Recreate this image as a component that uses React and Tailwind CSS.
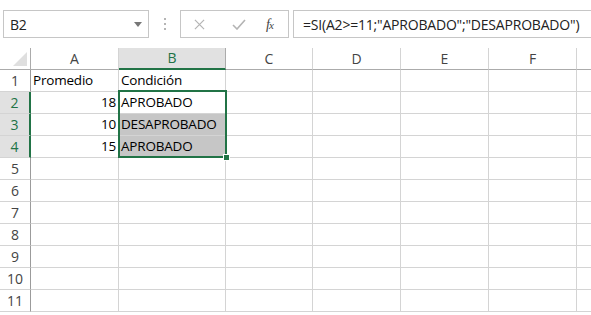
import React from 'react';

const cols = [
  { key: 'A', w: 'w-[88px]' },
  { key: 'B', w: 'w-[107px]' },
  { key: 'C', w: 'w-[87px]' },
  { key: 'D', w: 'w-[88px]' },
  { key: 'E', w: 'w-[88px]' },
  { key: 'F', w: 'w-[88px]' },
];

const data = {
  1: { A: 'Promedio', B: 'Condición' },
  2: { A: '18', B: 'APROBADO' },
  3: { A: '10', B: 'DESAPROBADO' },
  4: { A: '15', B: 'APROBADO' },
};

function Cell({ col, row }) {
  const v = data[row]?.[col.key] ?? '';
  const num = col.key === 'A' && row > 1;
  const gray = col.key === 'B' && (row === 3 || row === 4);
  return (
    <div
      className={`${col.w} h-[22px] shrink-0 border-r border-b border-[#d4d4d4] px-[2px] leading-[21px] text-[13.5px] tracking-[-0.2px] text-black overflow-visible whitespace-nowrap ${
        num ? 'text-right' : ''
      } ${gray ? 'bg-[#c6c6c6]' : 'bg-white'}`}
    >
      {v}
    </div>
  );
}

export default function App() {
  const rows = [1, 2, 3, 4, 5, 6, 7, 8, 9, 10, 11];
  return (
    <div className="w-[591px] h-[315px] bg-white overflow-hidden relative font-['Open_Sans',sans-serif]">
      {/* formula bar */}
      <div className="flex items-start pt-[10px] pl-[3px] h-[48px]">
        <div className="w-[146px] h-[28px] shrink-0 border border-[#c6c6c6] flex items-center justify-between pl-[6px] pr-[6px]">
          <span className="text-[14px] tracking-[-0.2px] text-[#222]">B2</span>
          <svg width="8" height="5" viewBox="0 0 8 5"><path d="M0 0h8L4 5z" fill="#777" /></svg>
        </div>
        <div className="w-[31px] h-[28px] shrink-0 flex flex-col items-center justify-center gap-[3px]">
          <span className="w-[2px] h-[2px] bg-[#b5b5b5]" />
          <span className="w-[2px] h-[2px] bg-[#b5b5b5]" />
          <span className="w-[2px] h-[2px] bg-[#b5b5b5]" />
        </div>
        <div className="w-[109px] h-[28px] shrink-0 border border-[#c6c6c6] flex items-center">
          <svg className="ml-[13px]" width="11" height="11" viewBox="0 0 12 12">
            <path d="M1 1L11 11M11 1L1 11" stroke="#b4b4b4" strokeWidth="1.3" />
          </svg>
          <svg className="ml-[27px]" width="14" height="11" viewBox="0 0 14 11">
            <path d="M1 6L5 10L13 1" stroke="#b4b4b4" strokeWidth="1.6" fill="none" />
          </svg>
          <span className="ml-[20px] text-[14px] italic text-[#444] font-['Liberation_Serif',serif] tracking-[-1px]">
            f<span className="text-[11px]">x</span>
          </span>
        </div>
        <div className="ml-[4px] flex-1 min-w-0 h-[28px] border border-r-0 border-[#c6c6c6] flex items-center pl-[9px] text-[14px] tracking-[-0.2px] text-[#222] whitespace-nowrap overflow-hidden">
          =SI(A2&gt;=11;"APROBADO";"DESAPROBADO")
        </div>
      </div>

      {/* grid */}
      <div className="flex flex-col">
        <div className="flex h-[22px]">
          <div className="w-[31px] h-[22px] shrink-0 border-r border-b border-[#ababab] relative">
            <svg className="absolute right-[3px] bottom-[3px]" width="14" height="14" viewBox="0 0 14 14">
              <path d="M14 0V14H0z" fill="#dfdfdf" />
            </svg>
          </div>
          {cols.map((c) =>
            c.key === 'B' ? (
              <div
                key={c.key}
                className={`${c.w} h-[22px] shrink-0 bg-[#e1e1e1] border-r border-[#ababab] border-b-2 border-b-[#217346] text-center text-[14px] leading-[20px] text-[#217346]`}
              >
                {c.key}
              </div>
            ) : (
              <div
                key={c.key}
                className={`${c.w} h-[22px] shrink-0 border-r border-[#d4d4d4] border-b border-b-[#ababab] text-center text-[14px] leading-[21px] text-[#444]`}
              >
                {c.key}
              </div>
            )
          )}
          <div className="flex-1 border-b border-[#ababab]" />
        </div>
        {rows.map((r) => {
          const sel = r >= 2 && r <= 4;
          return (
            <div key={r} className="flex h-[22px]">
              <div
                className={`w-[31px] h-[22px] shrink-0 border-b border-[#d4d4d4] text-center text-[14px] leading-[21px] ${
                  sel
                    ? 'bg-[#e1e1e1] text-[#217346] border-r-2 border-r-[#217346]'
                    : 'text-[#444] border-r border-r-[#9b9b9b]'
                }`}
              >
                {r}
              </div>
              {cols.map((c) => (
                <Cell key={c.key} col={c} row={r} />
              ))}
              <div className="flex-1 border-b border-[#d4d4d4]" />
            </div>
          );
        })}
      </div>

      {/* selection border B2:B4 */}
      <div className="absolute left-[118px] top-[90px] w-[109px] h-[68px] border-2 border-[#217346] pointer-events-none" />
      <div className="absolute left-[223px] top-[154px] w-[7px] h-[7px] bg-[#217346] border border-white" />
    </div>
  );
}
